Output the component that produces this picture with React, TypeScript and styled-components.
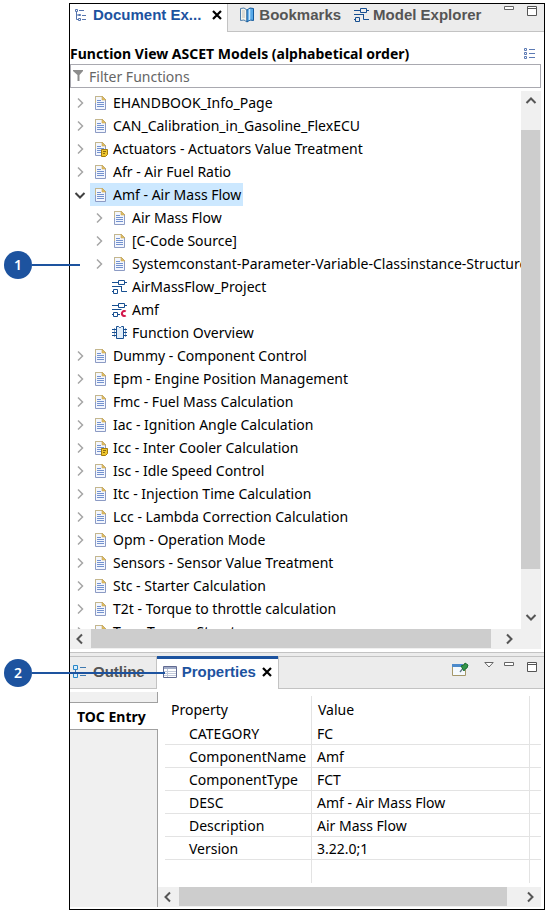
import React from 'react';
import styled, { createGlobalStyle, css } from 'styled-components';

const BLUE = '#1d539f';
const UI_FONT = '"Noto Sans", "Open Sans", sans-serif';
const TAB_FONT = '"Liberation Sans", Arial, sans-serif';

const GlobalStyle = createGlobalStyle`
  *, *::before, *::after { box-sizing: border-box; }
  body { margin: 0; background: #fff; color: #000; font: 14px/23px ${UI_FONT}; }
  button, input { font: inherit; color: inherit; margin: 0; padding: 0; border: 0; background: none; border-radius: 0; }
  svg { display: block; flex: none; }
  ul { list-style: none; margin: 0; padding: 0; }
`;

const Page = styled.main`
  position: relative;
  padding: 3px 4px 4px 69px;
`;

const Frame = styled.div`
  border: 1px solid #000;
`;

const Pane = styled.section`
  display: flex;
  flex-direction: column;
`;

const TabBar = styled.div<{ $tall?: boolean }>`
  display: flex;
  height: ${(p) => (p.$tall ? 33 : 28)}px;
  background: #ececec;
  box-shadow: inset 0 -1px #c3c3c3, inset 0 ${(p) => (p.$tall ? '1px' : '0')} #c3c3c3;
`;

const tabPadding = (active?: boolean, tall?: boolean) => {
  if (tall) return active ? '0 5px 2px 6px' : '0 11px 2px 3px';
  return active ? '0 4px 6px 4px' : '0 1px 6px 11px';
};

const Tab = styled.div<{ $active?: boolean; $tall?: boolean; $divided?: boolean }>`
  display: flex;
  align-items: center;
  padding: ${(p) => tabPadding(p.$active, p.$tall)};
  ${(p) => p.$divided && css`border-right: 1px solid #c3c3c3;`}
  ${(p) => p.$active && css`background: #fff;`}
  ${(p) => p.$active && p.$tall && css`box-shadow: inset 0 3px ${BLUE};`}
`;

const TabButton = styled.button<{ $active?: boolean; $gap?: number }>`
  display: flex;
  align-items: center;
  gap: ${(p) => p.$gap ?? 4}px;
  white-space: nowrap;
  font: bold 15px/20px ${TAB_FONT};
  color: ${(p) => (p.$active ? BLUE : '#555')};
`;

const IconButton = styled.button`
  display: flex;
  align-items: center;
  justify-content: center;
`;

const CloseButton = styled(IconButton)<{ $wide?: boolean }>`
  margin-left: ${(p) => (p.$wide ? 10 : 5)}px;
`;

const Tools = styled.div<{ $tall?: boolean }>`
  display: flex;
  align-items: flex-start;
  gap: 10px;
  margin-left: auto;
  padding: ${(p) => (p.$tall ? 6 : 2)}px 7px 0 0;
`;

const ToolGroup = styled.div<{ $gap: number }>`
  display: flex;
  align-items: flex-start;
  gap: ${(p) => p.$gap}px;
`;

const TitleRow = styled.header`
  display: flex;
  align-items: center;
  justify-content: space-between;
  height: 32px;
  padding: 12px 8px 0 0;
`;

const Title = styled.h1`
  margin: 0;
  font-size: 14px;
  line-height: 20px;
  font-weight: 700;
  white-space: nowrap;
`;

const Filter = styled.label`
  display: flex;
  align-items: center;
  gap: 5px;
  height: 24px;
  margin: 0 3px 3px 0;
  padding: 0 3px 0 2px;
  border: 1px solid #a9a9b0;
`;

const FilterInput = styled.input`
  flex: 1;
  min-width: 0;
  outline: none;
  &::placeholder { color: #666; opacity: 1; }
`;

const ScrollGrid = styled.div`
  display: grid;
  grid-template-columns: minmax(0, 1fr) 20px;
  margin-right: 3px;
`;

const TreeView = styled.div`
  height: 538px;
  overflow: hidden;
`;

const Row = styled.li<{ $level: number }>`
  display: flex;
  height: 23px;
  padding-left: ${(p) => p.$level * 19}px;
`;

const Toggle = styled(IconButton)`
  flex: none;
  width: 20px;
`;

const Entry = styled.span<{ $selected?: boolean }>`
  display: flex;
  align-items: center;
  gap: 5px;
  padding: 0 2px;
  white-space: nowrap;
  background: ${(p) => (p.$selected ? '#cce8ff' : 'transparent')};
`;

const ScrollBar = styled.div<{ $vertical?: boolean }>`
  display: flex;
  flex-direction: ${(p) => (p.$vertical ? 'column' : 'row')};
  min-height: 20px;
  background: #f0f0f0;
`;

const ScrollArrow = styled(IconButton)<{ $length: number; $vertical?: boolean }>`
  flex: none;
  width: ${(p) => (p.$vertical ? 20 : p.$length)}px;
  height: ${(p) => (p.$vertical ? p.$length : 20)}px;
`;

const Track = styled.div<{ $vertical?: boolean; $start?: number; $end: number }>`
  display: flex;
  flex: 1;
  padding: ${(p) => (p.$vertical ? `${p.$start ?? 0}px 1px ${p.$end}px 0` : `0 ${p.$end}px 1px ${p.$start ?? 0}px`)};
`;

const Thumb = styled.div`
  flex: 1;
  background: #cdcdcd;
`;

const Corner = styled.div`
  background: #f0f0f0;
`;

const Sash = styled.div`
  height: 4px;
  margin-top: 3px;
  border-top: 1px solid #c3c3c3;
  background: #ececec;
`;

const PropertiesBody = styled.div`
  display: grid;
  grid-template-columns: 88px minmax(0, 1fr);
  padding: 3px 3px 2px 0;
`;

const Sections = styled.nav`
  display: flex;
  flex-direction: column;
`;

const SectionSpacer = styled.div<{ $fill?: boolean }>`
  background: #f0f0f0;
  border-right: 1px solid #a0a0a0;
  ${(p) =>
    p.$fill
      ? css`flex: 1; border-top: 1px solid #a0a0a0;`
      : css`height: 11px; border-bottom: 1px solid #a0a0a0;`}
`;

const SectionButton = styled.button`
  height: 26px;
  padding-left: 7px;
  text-align: left;
  font-weight: 700;
  white-space: nowrap;
`;

const Details = styled.div`
  display: flex;
  flex-direction: column;
  min-width: 0;
`;

const TableWrap = styled.div`
  padding: 4px 0 4px 7px;
`;

const Table = styled.table`
  width: 100%;
  table-layout: fixed;
  border-collapse: separate;
  border-spacing: 0;
`;

const Col = styled.col<{ $width?: number }>`
  width: ${(p) => (p.$width ? `${p.$width}px` : 'auto')};
`;

const Cell = styled.td<{ $indent: number; $plain?: boolean; $last?: boolean }>`
  height: 23px;
  padding: 2px 0 0 ${(p) => p.$indent}px;
  line-height: 20px;
  white-space: nowrap;
  text-align: left;
  font-weight: 400;
  border-bottom: ${(p) => (p.$plain ? '0' : '1px solid #e3e3e3')};
  border-right: ${(p) => (p.$last ? '0' : '1px solid #e3e3e3')};
`;

const HeadCell = styled(Cell)`
  height: 26px;
`;

const Callout = styled.div<{ $top: number; $width: number }>`
  position: absolute;
  top: ${(p) => p.$top}px;
  left: 4px;
  display: flex;
  align-items: center;
  width: ${(p) => p.$width}px;
  pointer-events: none;
  &::after {
    content: '';
    flex: 1;
    height: 2px;
    background: ${BLUE};
  }
`;

const CalloutBadge = styled.span`
  width: 28px;
  height: 28px;
  border-radius: 50%;
  background: ${BLUE};
  color: #fff;
  font-size: 14px;
  line-height: 28px;
  font-weight: 600;
  text-align: center;
`;

const DocIcon = ({ note }: { note?: boolean }) => (
  <svg width="16" height="16" viewBox="0 0 16 16">
    <path d="M3.5 1.5h7l3 3v10h-10z" fill="#f3f6fd" stroke="#8c9bc4" />
    <path d="M3.5 8V1.5h7" fill="none" stroke="#c5b78c" />
    <path d="M10 1v4h4z" fill="#dfbd62" stroke="#c9a857" strokeWidth=".6" />
    <path d="M5 5.5h4M5 7.5h7M5 9.5h7M5 11.5h7" stroke="#7392cf" />
    {note && (
      <g>
        <path d="M9.5 8.5h6v5l-2 2h-4z" fill="#edc52e" stroke="#a47c0c" />
        <path d="M11 10.5h3M11 12.5h2" stroke="#8c6b10" />
      </g>
    )}
  </svg>
);

const ModelIcon = ({ code }: { code?: boolean }) => (
  <svg width="16" height="16" viewBox="-1 0 16 16" fill="none" stroke="#174f91">
    <path d="M0 3.500h6M13 3.500h2M6.500 1.500h6v4h-6zM0 7.500h9.500" />
    {code ? <path d="M0 12.500h1M1.500 10.500h4v4h-4zM6 12.500h2" /> : <path d="M9.500 7v5.500H15M0 12.500h1M1.500 10.500h4v4h-4z" />}
    {code && <path d="M13.700 9.600a2.300 2.500 0 1 0 0 3.900" stroke="#d3174b" strokeWidth="2" />}
  </svg>
);

const OverviewIcon = () => (
  <svg width="16" height="16" viewBox="-1 0 16 16" fill="none" stroke="#174f91">
    <path d="M4.500 1.500h2l1 1h1l1-1h2v12h-7z" fill="#e3effa" />
    <path d="M0 4.500h4M0 7.500h4M0 10.500h4M12 4.500h3M12 7.500h3M12 10.500h3" />
    <path d="M2.500 3.500v2M2.500 6.500v2M2.500 9.500v2M13.500 3.500v2M13.500 6.500v2M13.500 9.500v2" />
  </svg>
);

const TreeIcon = () => (
  <svg width="14" height="14" viewBox="0 0 14 14" fill="none" stroke="#5574ae">
    <path d="M1.500 1.500h2v2h-2zM4.500 6.500h2v1h-2zM4.500 10.500h2v2h-2z" />
    <path d="M5 2.500h5M2.500 4v7.500H4M2.500 7H4M8 7.500h4M8 11.500h4" />
  </svg>
);

const BookIcon = () => (
  <svg width="16" height="16" viewBox="0 0 16 16">
    <path d="M1.500 1.500 5 1l3 2v12l-3-2-3.500.500z" fill="#f4f4ec" stroke="#4d7eab" />
    <path d="M3 4h3M3 6h3M3 8h3M3 10h3" stroke="#aaa" strokeWidth=".7" />
    <path d="m8 3 3-2 3.500.500v12L11 13l-3 2z" fill="#58a9e8" stroke="#145a9c" />
    <path d="M10.500 2v11" stroke="#c9e6fb" strokeWidth="1.500" />
  </svg>
);

const ListIcon = () => (
  <svg width="12" height="12" viewBox="0 0 12 12" fill="none" stroke="#5c7ab4">
    <path d="M.5.500h2v2h-2zM.5 4.500h2v2h-2zM.5 8.500h2v2h-2z" />
    <path d="M5 1.500h6M5 5.500h6M5 9.500h6" />
  </svg>
);

const FunnelIcon = () => (
  <svg width="11" height="14" viewBox="0 0 11 14">
    <path d="M0 1h10v1L6.500 6v6h-2V6L0 2z" fill="#8c8c8c" />
  </svg>
);

const OutlineIcon = () => (
  <svg width="15" height="16" viewBox="0 0 15 16" fill="#d9eefc" stroke="#2886c8">
    <path d="M.5 1.500h4v4h-4zM.5 9.500h4v4h-4z" />
    <path d="M7 3.500h6M7 11.500h6M2.500 6v3" stroke="#3f79af" />
  </svg>
);

const PropertiesIcon = () => (
  <svg width="14" height="14" viewBox="0 0 14 14">
    <path d="M.5 1.500h13v11H.5z" fill="#fff" stroke="#626b91" />
    <path d="M1 2h12v2H1z" fill="#a0abc7" />
    <path d="M1 6.500h12M1 8.500h12M1 10.500h12M4.500 4v8" stroke="#c1c9da" />
  </svg>
);

const CrossIcon = () => (
  <svg width="12" height="12" viewBox="0 0 12 12">
    <path d="m2 2 8 8M10 2l-8 8" stroke="#000" strokeWidth="2.200" />
  </svg>
);

const MinimizeIcon = () => (
  <svg width="10" height="5" viewBox="0 0 10 5">
    <path d="M.5.500h9v3h-9z" fill="#fff" stroke="#666" />
  </svg>
);

const MaximizeIcon = () => (
  <svg width="10" height="11" viewBox="0 0 10 11">
    <path d="M.5.500h9v9h-9zM.5 2.500h9" fill="#fff" stroke="#555" />
  </svg>
);

const MenuIcon = () => (
  <svg width="10" height="6" viewBox="0 0 10 6">
    <path d="M.8.500h8.400L5 5z" fill="#fff" stroke="#666" />
  </svg>
);

const PinIcon = () => (
  <svg width="17" height="15" viewBox="0 0 17 15">
    <path d="M.5 2.500h13v11H.5z" fill="#f5fafe" stroke="#a5976a" />
    <path d="M0 2h11v3H0z" fill="#4c8acb" />
    <path d="m8 10 4-5" stroke="#62798a" strokeWidth="1.300" />
    <path d="m9 4 3-1 1-2 3 2-1 3-2 1-1 2z" fill="#32964a" stroke="#1c6f32" />
  </svg>
);

type Direction = 'up' | 'down' | 'left' | 'right';
const chevrons: Record<Direction, string> = {
  up: 'M1.500 8 6 3.500 10.500 8',
  down: 'M1.500 4 6 8.500 10.500 4',
  left: 'M8 1.500 3.500 6 8 10.500',
  right: 'M4 1.500 8.500 6 4 10.500',
};

const Chevron = ({ dir, color = '#555', weight = 2 }: { dir: Direction; color?: string; weight?: number }) => (
  <svg width="12" height="12" viewBox="0 0 12 12">
    <path d={chevrons[dir]} fill="none" stroke={color} strokeWidth={weight} />
  </svg>
);

type Kind = 'doc' | 'note' | 'model' | 'code' | 'overview';
type Node = { label: string; kind?: Kind; level?: number; open?: boolean };

const nodes: Node[] = [
  { label: 'EHANDBOOK_Info_Page' },
  { label: 'CAN_Calibration_in_Gasoline_FlexECU' },
  { label: 'Actuators - Actuators Value Treatment', kind: 'note' },
  { label: 'Afr - Air Fuel Ratio' },
  { label: 'Amf - Air Mass Flow', open: true },
  { label: 'Air Mass Flow', level: 1 },
  { label: '[C-Code Source]', level: 1 },
  { label: 'Systemconstant-Parameter-Variable-Classinstance-Structure', level: 1 },
  { label: 'AirMassFlow_Project', level: 1, kind: 'model' },
  { label: 'Amf', level: 1, kind: 'code' },
  { label: 'Function Overview', level: 1, kind: 'overview' },
  { label: 'Dummy - Component Control' },
  { label: 'Epm - Engine Position Management' },
  { label: 'Fmc - Fuel Mass Calculation' },
  { label: 'Iac - Ignition Angle Calculation' },
  { label: 'Icc - Inter Cooler Calculation', kind: 'note' },
  { label: 'Isc - Idle Speed Control' },
  { label: 'Itc - Injection Time Calculation' },
  { label: 'Lcc - Lambda Correction Calculation' },
  { label: 'Opm - Operation Mode' },
  { label: 'Sensors - Sensor Value Treatment' },
  { label: 'Stc - Starter Calculation' },
  { label: 'T2t - Torque to throttle calculation' },
  { label: 'Tqs - Torque Structure' },
];

const properties = [
  ['CATEGORY', 'FC'],
  ['ComponentName', 'Amf'],
  ['ComponentType', 'FCT'],
  ['DESC', 'Amf - Air Mass Flow'],
  ['Description', 'Air Mass Flow'],
  ['Version', '3.22.0;1'],
];

const NodeIcon = ({ kind = 'doc' }: { kind?: Kind }) => {
  if (kind === 'model' || kind === 'code') return <ModelIcon code={kind === 'code'} />;
  if (kind === 'overview') return <OverviewIcon />;
  return <DocIcon note={kind === 'note'} />;
};

const TreeRow = ({ label, kind = 'doc', level = 0, open }: Node) => {
  const leaf = kind === 'model' || kind === 'code' || kind === 'overview';
  return (
    <Row $level={level} role="treeitem" aria-level={level + 1} aria-selected={!!open} aria-expanded={leaf ? undefined : !!open}>
      <Toggle as={leaf ? 'span' : 'button'} aria-label={leaf ? undefined : `Toggle ${label}`}>
        {!leaf && <Chevron dir={open ? 'down' : 'right'} color={open ? '#404040' : '#a6a6a6'} weight={open ? 2 : 1.5} />}
      </Toggle>
      <Entry $selected={open}>
        <NodeIcon kind={kind} />
        {label}
      </Entry>
    </Row>
  );
};

const HorizontalScroll = ({ end, last }: { end: number; last: number }) => (
  <ScrollBar>
    <ScrollArrow $length={20} aria-label="Scroll left"><Chevron dir="left" /></ScrollArrow>
    <Track $start={1} $end={end}><Thumb /></Track>
    <ScrollArrow $length={last} aria-label="Scroll right"><Chevron dir="right" /></ScrollArrow>
  </ScrollBar>
);

const WindowTools = () => (
  <ToolGroup $gap={13}>
    <IconButton aria-label="Minimize"><MinimizeIcon /></IconButton>
    <IconButton aria-label="Maximize"><MaximizeIcon /></IconButton>
  </ToolGroup>
);

export default function App() {
  return (
    <Page>
      <GlobalStyle />
      <Frame>
        <Pane aria-label="Document Explorer">
          <TabBar>
            <Tab $active $divided>
              <TabButton $active $gap={5}><TreeIcon />Document Ex...</TabButton>
              <CloseButton $wide aria-label="Close Document Explorer"><CrossIcon /></CloseButton>
            </Tab>
            <Tab><TabButton><BookIcon />Bookmarks</TabButton></Tab>
            <Tab><TabButton><ModelIcon />Model Explorer</TabButton></Tab>
            <Tools><WindowTools /></Tools>
          </TabBar>
          <TitleRow>
            <Title>Function View ASCET Models (alphabetical order)</Title>
            <IconButton aria-label="Change view"><ListIcon /></IconButton>
          </TitleRow>
          <Filter>
            <FunnelIcon />
            <FilterInput placeholder="Filter Functions" aria-label="Filter Functions" />
          </Filter>
          <ScrollGrid>
            <TreeView>
              <ul role="tree">{nodes.map((n) => <TreeRow key={n.label} {...n} />)}</ul>
            </TreeView>
            <ScrollBar $vertical>
              <ScrollArrow $vertical $length={20} aria-label="Scroll up"><Chevron dir="up" /></ScrollArrow>
              <Track $vertical $start={19} $end={36}><Thumb /></Track>
              <ScrollArrow $vertical $length={24} aria-label="Scroll down"><Chevron dir="down" /></ScrollArrow>
            </ScrollBar>
            <HorizontalScroll end={6} last={24} />
            <Corner />
          </ScrollGrid>
        </Pane>
        <Sash />
        <Pane aria-label="Properties">
          <TabBar $tall>
            <Tab $tall $divided><TabButton $gap={5}><OutlineIcon />Outline</TabButton></Tab>
            <Tab $tall $active $divided>
              <TabButton $active $gap={5}><PropertiesIcon />Properties</TabButton>
              <CloseButton aria-label="Close Properties"><CrossIcon /></CloseButton>
            </Tab>
            <Tools $tall>
              <ToolGroup $gap={15}>
                <IconButton aria-label="Pin view"><PinIcon /></IconButton>
                <IconButton aria-label="View menu"><MenuIcon /></IconButton>
              </ToolGroup>
              <WindowTools />
            </Tools>
          </TabBar>
          <PropertiesBody>
            <Sections>
              <SectionSpacer />
              <SectionButton>TOC Entry</SectionButton>
              <SectionSpacer $fill />
            </Sections>
            <Details>
              <TableWrap>
                <Table>
                  <colgroup>
                    <Col $width={147} />
                    <Col />
                    <Col $width={11} />
                  </colgroup>
                  <thead>
                    <tr>
                      <HeadCell as="th" scope="col" $indent={6} $plain>Property</HeadCell>
                      <HeadCell as="th" scope="col" $indent={6} $plain>Value</HeadCell>
                      <HeadCell $indent={0} $plain $last />
                    </tr>
                  </thead>
                  <tbody>
                    {properties.map(([name, value]) => (
                      <tr key={name}>
                        <Cell $indent={24}>{name}</Cell>
                        <Cell $indent={5}>{value}</Cell>
                        <Cell $indent={0} $last />
                      </tr>
                    ))}
                    <tr>
                      <Cell $indent={0} $plain />
                      <Cell $indent={0} $plain />
                      <Cell $indent={0} $plain $last />
                    </tr>
                  </tbody>
                </Table>
              </TableWrap>
              <HorizontalScroll end={11} last={23} />
            </Details>
          </PropertiesBody>
        </Pane>
      </Frame>
      <Callout $top={251} $width={76}><CalloutBadge>1</CalloutBadge></Callout>
      <Callout $top={659} $width={161}><CalloutBadge>2</CalloutBadge></Callout>
    </Page>
  );
}
